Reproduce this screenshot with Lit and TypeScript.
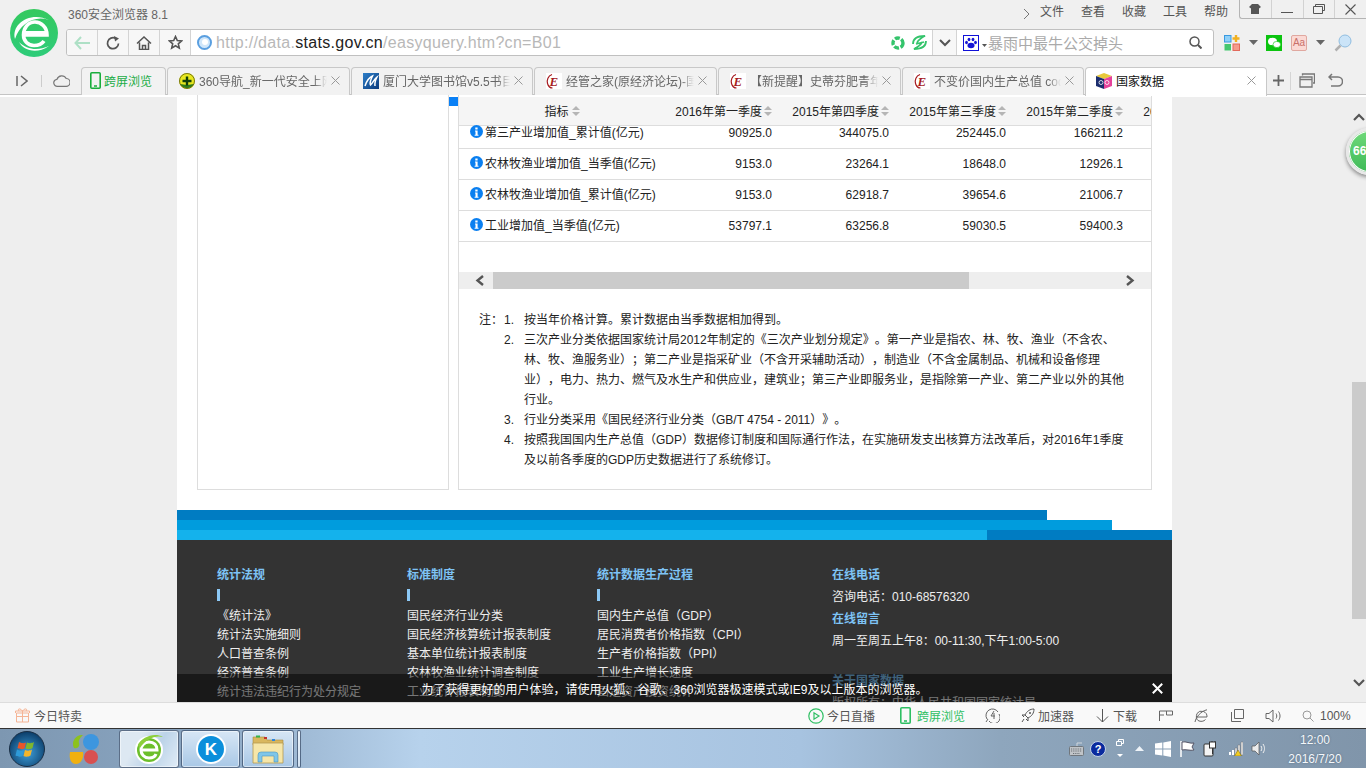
import { LitElement, html, css, svg } from "lit";
import { customElement } from "lit/decorators.js";

const logo = (s: number) => svg`<svg width=${s} height=${s} viewBox="0 0 48 48"><defs><linearGradient id="lg" x1="0" y1="0" x2="0" y2="1"><stop offset="0" stop-color="#35c95f"/><stop offset="1" stop-color="#2ecc7a"/></linearGradient></defs><circle cx="24" cy="24" r="24" fill="url(#lg)"/><path d="M13.500 26H37C37 18 31 13 25 13 18 13 13.500 19 13.500 26 13.500 32 18 36.500 24 36.500 28 36.500 32 35 34 32" fill="none" stroke="#fff" stroke-width="3.600"/><path d="M14 24.500h22" stroke="#fff" stroke-width="5"/><path d="M5 30C1 15 20 2 39 11 24 6 10 15 5 30Z" fill="#fff"/><path d="M9 33C13 41 26 46 39 37 28 42 17 41 9 33Z" fill="#fff"/></svg>`;
const eIcon = svg`<svg width="16" height="16" viewBox="0 0 16 16"><rect width="16" height="16" fill="#fff"/><path d="M6 1.500C2 3 .6 7 1.500 10.500 2.200 13 4 15 6.500 15" fill="none" stroke="#a61c22" stroke-width="1.200"/><text x="3.500" y="12.500" font-family="Liberation Serif" font-style="italic" font-weight="700" font-size="13" fill="#a61c22">E</text></svg>`;
const navIcon = svg`<svg width="16" height="16" viewBox="0 0 16 16"><circle cx="8" cy="8" r="8" fill="#e8e81e"/><path d="M1 11a8 8 0 0 0 14 0l-7 1Z" fill="#2f7d18"/><circle cx="8" cy="8" r="7.500" fill="none" stroke="#5a5a10" stroke-width=".8"/><path d="M8 3.500v9M3.500 8h9" stroke="#123f08" stroke-width="2.400"/></svg>`;
const libIcon = svg`<svg width="16" height="16" viewBox="0 0 16 16"><defs><linearGradient id="lb" x1="0" y1="0" x2="1" y2="1"><stop offset="0" stop-color="#2d7fc9"/><stop offset="1" stop-color="#0b3a7c"/></linearGradient></defs><rect width="16" height="16" fill="url(#lb)"/><path d="M2 13C4 7 7 4 9.500 3 8 6 6.500 10 7.500 12 10 10 11 6 14 4c-1.500 3-2.500 6-2 9" fill="none" stroke="#fff" stroke-width="1.500"/></svg>`;
const cubeIcon = svg`<svg width="16" height="16" viewBox="0 0 16 16"><path d="M0 3l8-3 8 3-8 3Z" fill="#e8c93a"/><path d="M0 3l8 3v10l-8-3Z" fill="#1b2d6e"/><path d="M8 6l8-3v10l-8 3Z" fill="#e6429b"/><circle cx="5" cy="9.500" r="2" fill="none" stroke="#fff" stroke-width=".8"/><circle cx="11" cy="9.500" r="2" fill="none" stroke="#fff" stroke-width=".8"/></svg>`;
const phoneIcon = (c: string) => svg`<svg width="11" height="17" viewBox="0 0 11 17"><rect x=".8" y=".8" width="9.400" height="15.400" rx="1" fill="none" stroke=${c} stroke-width="1.600"/><path d="M4 14h3" stroke=${c} stroke-width="1.600"/></svg>`;
const swirl = svg`<svg width="15" height="15" viewBox="0 0 15 15"><path d="M1 9C1 4 5 1 13 1 9 3 6 5 5 8M14 6c0 5-4 8-12 8 4-2 7-4 8-7M4 9l8-2" fill="none" stroke="#35c46c" stroke-width="1.800"/></svg>`;
const shutter = svg`<svg width="14" height="14" viewBox="0 0 14 14"><circle cx="7" cy="7" r="5" fill="none" stroke="#35c46c" stroke-width="3.400" stroke-dasharray="5 1.600"/></svg>`;
const closeX = svg`<svg width="9" height="9" viewBox="0 0 9 9"><path d="M.5.500l8 8M8.500.500l-8 8" stroke="#999" stroke-width="1"/></svg>`;
const tri = svg`<svg width="9" height="5" viewBox="0 0 9 5"><path d="M0 0h9L4.500 5Z" fill="#666"/></svg>`;
const sortIcon = svg`<svg width="8" height="10" viewBox="0 0 8 10"><path d="M4 0l4 4H0ZM4 10L0 6h8Z" fill="#b5b5b5"/></svg>`;
const infoIcon = svg`<svg width="13" height="13" viewBox="0 0 13 13"><circle cx="6.500" cy="6.500" r="6.500" fill="#0a7ff0"/><path d="M5.300 2.500h2.300v2H5.300ZM5 5.500h2.600v4.200h.9v1H4.600v-1h.9V6.500H5Z" fill="#fff"/></svg>`;

const tabs = [
  { w: 85, label: "跨屏浏览", icon: phoneIcon("#19ad3c"), kind: "green" },
  { w: 183, label: "360导航_新一代安全上网导航", icon: navIcon },
  { w: 182, label: "厦门大学图书馆v5.5书目检索系统", icon: libIcon },
  { w: 183, label: "经管之家(原经济论坛)-国内经济", icon: eIcon },
  { w: 183, label: "【新提醒】史蒂芬肥青年队队长", icon: eIcon },
  { w: 182, label: "不变价国内生产总值 code", icon: eIcon },
  { w: 182, label: "国家数据", icon: cubeIcon, kind: "active" },
];
const rows = [
  ["第三产业增加值_累计值(亿元)", "90925.0", "344075.0", "252445.0", "166211.2"],
  ["农林牧渔业增加值_当季值(亿元)", "9153.0", "23264.1", "18648.0", "12926.1"],
  ["农林牧渔业增加值_累计值(亿元)", "9153.0", "62918.7", "39654.6", "21006.7"],
  ["工业增加值_当季值(亿元)", "53797.1", "63256.8", "59030.5", "59400.3"],
];
const quarters = ["2016年第一季度", "2015年第四季度", "2015年第三季度", "2015年第二季度", "2015年第一季度"];
const notes = [
  ["1.", ["按当年价格计算。累计数据由当季数据相加得到。"]],
  ["2.", ["三次产业分类依据国家统计局2012年制定的《三次产业划分规定》。第一产业是指农、林、牧、渔业（不含农、", "林、牧、渔服务业）；第二产业是指采矿业（不含开采辅助活动），制造业（不含金属制品、机械和设备修理", "业），电力、热力、燃气及水生产和供应业，建筑业；第三产业即服务业，是指除第一产业、第二产业以外的其他", "行业。"]],
  ["3.", ["行业分类采用《国民经济行业分类（GB/T 4754 - 2011）》。"]],
  ["4.", ["按照我国国内生产总值（GDP）数据修订制度和国际通行作法，在实施研发支出核算方法改革后，对2016年1季度", "及以前各季度的GDP历史数据进行了系统修订。"]],
] as [string, string[]][];
const footerCols = [
  { w: 190, t: "统计法规", items: ["《统计法》", "统计法实施细则", "人口普查条例", "经济普查条例", "统计违法违纪行为处分规定"] },
  { w: 190, t: "标准制度", items: ["国民经济行业分类", "国民经济核算统计报表制度", "基本单位统计报表制度", "农林牧渔业统计调查制度", "工业统计报表制度"] },
  { w: 235, t: "统计数据生产过程", items: ["国内生产总值（GDP）", "居民消费者价格指数（CPI）", "生产者价格指数（PPI）", "工业生产增长速度", "固定资产投资统计"] },
];
const statusRight = [
  { w: 92, text: "今日直播", icon: svg`<svg width="16" height="16" viewBox="0 0 16 16"><circle cx="8" cy="8" r="7.200" fill="none" stroke="#2fbf63" stroke-width="1.200"/><path d="M6 4.800v6.400L11 8Z" fill="none" stroke="#2fbf63" stroke-width="1.200"/></svg>`, gap: 3 },
  { w: 85, text: "跨屏浏览", green: true, icon: phoneIcon("#2fbf63"), gap: 6 },
  { w: 36, text: "", icon: svg`<svg width="15" height="15" viewBox="0 0 15 15"><path d="M2 11A6 6 0 0 1 13 4M14 6A6 6 0 0 1 4 13M1 14l2-3" fill="none" stroke="#666"/><path d="M9 3L6 8h4M9 5v6" fill="none" stroke="#666"/></svg>`, gap: 0 },
  { w: 75, text: "加速器", icon: svg`<svg width="14" height="15" viewBox="0 0 14 15"><path d="M13 1C9 1 6 3 4 7l3 3c4-2 6-5 6-9ZM4 7H1l2 2M7 10v3l-2-2M3 11l-2 3" fill="none" stroke="#555"/><circle cx="9" cy="5" r="1" fill="#555"/></svg>`, gap: 3 },
  { w: 63, text: "下载", icon: svg`<svg width="13" height="14" viewBox="0 0 13 14"><path d="M6.500 0v13M1 7.500l5.500 5.500L12 7.500" fill="none" stroke="#555"/></svg>`, gap: 4 },
  { w: 35, text: "", icon: svg`<svg width="14" height="12" viewBox="0 0 14 12"><path d="M.5 11V1h13v4h-6v-4M.5 5H5" fill="none" stroke="#666"/></svg>`, gap: 0 },
  { w: 37, text: "", icon: svg`<svg width="14" height="14" viewBox="0 0 14 14"><path d="M2.500 8h10.500A5.500 5.500 0 0 0 3 4.500C2 7 2 10 4 11.500c2.500 1.500 6 1 7.500-1M1 13C2 8 7 2 13 .8" fill="none" stroke="#666"/></svg>`, gap: 0 },
  { w: 34, text: "", icon: svg`<svg width="13" height="13" viewBox="0 0 13 13"><path d="M3.500 9.500V.5h9v9ZM.5 3v9.500H10" fill="none" stroke="#666"/></svg>`, gap: 0 },
  { w: 37, text: "", icon: svg`<svg width="16" height="14" viewBox="0 0 16 14"><path d="M1 4.500h3L8 1v12L4 9.500H1ZM11 4.500c1 1.500 1 3.500 0 5M13.500 2.500c2 3 2 6 0 9" fill="none" stroke="#666"/></svg>`, gap: 0 },
  { w: 49, text: "100%", icon: svg`<svg width="12" height="12" viewBox="0 0 12 12"><circle cx="5" cy="5" r="4" fill="none" stroke="#999"/><path d="M8 8l3.500 3.500" stroke="#999"/></svg>`, gap: 6 },
];
const taskLogo = svg`<svg width="30" height="32" viewBox="0 0 30 32"><circle cx="15" cy="17" r="14" fill="#fff"/><circle cx="15" cy="17" r="12" fill="#6cbf2b"/><path d="M7 17h16c0-5-3-8-8-8s-8 4-8 8 3 8 8 8c3 0 6-1 7-4" fill="none" stroke="#fff" stroke-width="3"/><path d="M4 12C8 4 20-1 29 4 21 2 12 6 6 15Z" fill="#8ccf3a"/></svg>`;

@customElement("app-root")
export class AppRoot extends LitElement {
  static styles = css`
    :host { display: block; width: 1366px; height: 768px; overflow: hidden; font-family: "Liberation Sans", "Noto Sans CJK SC", sans-serif; font-size: 12px; color: #333; background: #f0f0f0; text-spacing-trim: space-all; }
    svg { display: block; flex: none; }
    .chrome { height: 95px; background: #f0f0f0; display: flex; flex-direction: column; }
    .top { display: flex; height: 67px; }
    .logo { width: 66px; padding: 9px 0 0 10px; box-sizing: border-box; }
    .topmain { flex: 1; display: flex; flex-direction: column; }
    .title { height: 29px; display: flex; align-items: flex-start; }
    .title-text { margin: 8px 0 0 2px; line-height: 14px; color: #666; font-size: 12px; flex: 1; }
    .chev { margin: 8px 10px 0 0; }
    .menu { display: flex; gap: 17px; margin: 5px 11px 0 0; line-height: 14px; color: #555; }
    .win { display: flex; width: 127px; height: 19px; box-sizing: border-box; border: 1px solid #b4b4b4; border-top: 0; border-right: 0; border-radius: 0 0 0 3px; }
    .win span { flex: 1; display: flex; align-items: center; justify-content: center; border-right: 1px solid #d2d2d2; }
    .win span:last-child { border-right: 0; }
    .addrrow { display: flex; align-items: center; height: 27px; }
    .addr { width: 1148px; height: 27px; box-sizing: border-box; border: 1px solid #c0c0c0; border-radius: 3px; display: flex; background: #fff; overflow: hidden; }
    .nav { width: 31px; box-sizing: border-box; display: flex; align-items: center; justify-content: center; background: #f7f7f7; border-right: 1px solid #d4d4d4; flex: none; }
    .url { flex: 1; display: flex; align-items: center; padding-left: 6px; font-size: 16px; color: #b8b8b8; letter-spacing: .3px; }
    .url b { font-weight: 400; color: #222; }
    .url svg { margin-right: 4px; }
    .urlicons { display: flex; gap: 7px; margin: 0 5px 0 auto; align-items: center; }
    .urlicons svg { margin-right: 0; }
    .chevbox { width: 25px; box-sizing: border-box; flex: none; display: flex; align-items: center; justify-content: center; border-left: 1px solid #d4d4d4; border-right: 1px solid #d4d4d4; background: #f7f7f7; }
    .search { width: 256px; flex: none; display: flex; align-items: center; padding-left: 6px; box-sizing: border-box; font-size: 15px; color: #aaa; }
    .paw { width: 16px; height: 16px; border: 1px solid #1010d8; box-sizing: border-box; flex: none; }
    .search .t { margin: 6px 1px 0 3px; }
    .search .txt { flex: 1; white-space: nowrap; }
    .search .mag { margin-right: 11px; }
    .tools { display: flex; align-items: center; padding-left: 10px; }
    .m9 { margin-left: 9px; }
    .m8 { margin-left: 8px; }
    .aa { width: 16px; height: 16px; box-sizing: border-box; border: 1px solid #e0a8a0; border-radius: 2px; background: #fbd9d4; color: #c8706a; font-size: 10px; line-height: 14px; text-align: center; margin-left: 9px; }
    .tabrow { height: 28px; display: flex; border-bottom: 1px solid #c4c4c4; box-sizing: border-box; }
    .tabtools { width: 81px; display: flex; align-items: center; padding-left: 16px; box-sizing: border-box; flex: none; }
    .sep { width: 1px; height: 12px; background: #ccc; margin: 0 11px 0 13px; flex: none; }
    .tabs { display: flex; gap: 1px; }
    .tab { box-sizing: border-box; height: 28px; border: 1px solid #c8c8c8; border-bottom: 0; border-radius: 4px 4px 0 0; background: #f2f2f2; display: flex; align-items: center; padding: 0 9px 2px 11px; gap: 4px; color: #666; white-space: nowrap; overflow: hidden; }
    .tab .lbl { flex: 1; overflow: hidden; -webkit-mask-image: linear-gradient(to right, #000 90%, transparent); mask-image: linear-gradient(to right, #000 90%, transparent); }
    .tab.green { color: #1bad46; font-size: 12px; padding: 0 0 2px 8px; gap: 3px; }
    .tab.green .lbl { -webkit-mask-image: none; mask-image: none; }
    .tab.active { background: #fff; color: #111; height: 29px; padding: 0 10px 3px 10px; position: relative; z-index: 1; }
    .tab.active .lbl { -webkit-mask-image: none; mask-image: none; }
    .tabend { display: flex; align-items: center; padding-left: 6px; flex: none; }
    .tabend .d { width: 1px; height: 18px; background: #d5d5d5; margin: 0 8px 0 6px; }
    .view { height: 607px; background: linear-gradient(#fff 2px, #eee 2px); display: flex; position: relative; overflow: hidden; }
    .page { margin-left: 177px; width: 995px; background: #fff; position: relative; display: flex; flex-direction: column; flex: none; }
    .panels { height: 395px; display: flex; padding-left: 20px; gap: 9px; position: relative; flex: none; }
    .lp { width: 252px; box-sizing: border-box; border: 1px solid #ddd; border-top: 0; }
    .rp { width: 694px; box-sizing: border-box; border: 1px solid #ddd; border-top: 0; padding-top: 2px; overflow: hidden; }
    .blue { position: absolute; left: 272px; top: 2px; width: 9px; height: 9px; background: #0a80f5; }
    .hdr { height: 29px; background: #f5f5f5; border-bottom: 1px solid #ddd; box-sizing: border-box; display: flex; color: #222; padding-bottom: 2px; }
    .c1 { width: 197px; flex: none; display: flex; align-items: center; }
    .hdr .c1 { justify-content: center; padding-left: 9px; box-sizing: border-box; gap: 3px; }
    .cn { width: 117px; flex: none; display: flex; align-items: center; justify-content: flex-end; padding-right: 1px; box-sizing: border-box; white-space: nowrap; gap: 2px; }
    .hdr .cn svg, .hdr .c1 svg { margin-top: 2px; }
    .clip { display: flex; overflow: hidden; flex: 1; }
    .row { height: 31px; display: flex; border-bottom: 1px solid #ddd; box-sizing: border-box; padding-bottom: 2px; color: #222; }
    .row.first { height: 23px; padding-bottom: 10px; }
    .row .c1 { padding: 0 0 2px 11px; box-sizing: border-box; gap: 2px; white-space: nowrap; }
    .row .cn { padding-top: 2px; }
    .hbar { height: 17px; margin-top: 30px; background: #eee; display: flex; align-items: center; position: relative; }
    .hbar .thumb { margin-left: 34px; width: 476px; height: 17px; background: #cbcbcb; }
    .hbar .l { position: absolute; left: 16px; top: 3px; }
    .hbar .r { position: absolute; right: 16px; top: 3px; }
    .notes { margin: 21px 0 0 20px; display: flex; line-height: 20px; color: #222; white-space: nowrap; }
    .notes .zhu { width: 25px; flex: none; }
    .nl { display: flex; }
    .nl .n { width: 20px; flex: none; }
    .stripes { margin-top: 20px; flex: none; }
    .s1 { height: 10px; width: 870px; background: #007cc2; }
    .s2 { height: 10px; width: 935px; background: #009cdd; }
    .s3 { height: 10px; background: linear-gradient(to right, #14b2ec 810px, #007cc2 810px); }
    .foot { flex: 1; background: #333; display: flex; padding: 26px 0 0 40px; color: #eee; line-height: 19px; overflow: hidden; }
    .fc { flex: none; }
    .fh { color: #7ec3f5; font-weight: 700; line-height: 18px; }
    .bar { width: 3px; height: 12px; background: #8cc8f5; margin: 5px 0 6px; }
    .fc4 { line-height: 22px; margin-top: -2px; }
    .fc4 .fh { line-height: 22px; }
    .fc4 .sp { margin-top: 18px; }
    .notice { position: absolute; left: 0; right: 0; bottom: 0; height: 28px; background: rgba(0,0,0,.5); color: #fff; display: flex; align-items: center; justify-content: center; }
    .notice svg { position: absolute; right: 9px; top: 9px; }
    .vs { flex: 1; position: relative; display: flex; flex-direction: column; align-items: flex-end; }
    .vs .up { margin: 18px 1px 0 0; }
    .vs .thumb { width: 14px; height: 237px; margin-top: 261px; background: #cbcbcb; }
    .vs .down { margin: 60px 1px 0 0; }
    .ball { position: absolute; left: 1346px; top: 33px; width: 47px; height: 47px; border-radius: 50%; box-sizing: border-box; border: 3px solid #e8e8e8; background: linear-gradient(#6fd979, #3fba58); box-shadow: 0 2px 4px rgba(0,0,0,.45), inset 0 0 0 1px #fff; color: #fff; font-weight: 700; font-size: 12px; line-height: 41px; padding-left: 4px; }
    .status { height: 26px; background: #f9f9f9; border-top: 1px solid #ddd; box-sizing: border-box; display: flex; align-items: center; color: #555; }
    .today { display: flex; align-items: center; gap: 4px; padding-left: 15px; }
    .sr { display: flex; margin-left: auto; padding-right: 15px; }
    .si { display: flex; align-items: center; box-sizing: border-box; white-space: nowrap; }
    .si.g { color: #2fbf63; }
    .task { height: 40px; background: linear-gradient(to right, #7d97b1 0, #8ba6c2 200px, #b7d2ec 420px, #a7c3e0 800px, #8ea6bd 1000px, #8095aa 1366px); border-top: 1px solid #333; box-sizing: border-box; display: flex; align-items: center; }
    .orb { margin-left: 9px; }
    .ms { margin-left: 24px; }
    .tb { height: 38px; margin-left: 2px; box-sizing: border-box; border: 1px solid rgba(40,60,90,.7); border-radius: 3px; background: linear-gradient(#d7e6f5, #a9c8e6); box-shadow: inset 0 0 0 1px rgba(255,255,255,.5); display: flex; align-items: center; justify-content: center; flex: none; }
    .tb.on { background: linear-gradient(120deg, #dde8f2 30%, #bcd3e8 60%, #e0ecf7); margin-left: 20px; width: 60px; }
    .tb.k { width: 59px; }
    .tb.f { width: 52px; }
    .tb.x { width: 4px; margin-left: 3px; }
    .tray { margin-left: auto; display: flex; align-items: center; padding-right: 21px; color: #fff; }
    .trayicons { display: flex; align-items: center; }
    .ti6 { margin-left: 6px; }
    .ti8 { margin-left: 8px; }
    .ti9 { margin-left: 9px; }
    .ti10 { margin-left: 10px; }
    .ti11 { margin-left: 11px; }
    .clock { width: 60px; margin-left: 19px; padding-top: 2px; text-align: center; line-height: 19px; font-size: 12px; color: #f4f8fb; text-shadow: 0 0 2px rgba(60,80,100,.6); }
    .undo { margin-left: 13px; }
  `;

  render() {
    return html`
      <div class="chrome">
        <div class="top">
          <div class="logo">${logo(48)}</div>
          <div class="topmain">
            <div class="title">
              <div class="title-text">360安全浏览器 8.1</div>
              <svg class="chev" width="7" height="12" viewBox="0 0 7 12"><path d="M1 1l5 5-5 5" fill="none" stroke="#777"/></svg>
              <div class="menu"><span>文件</span><span>查看</span><span>收藏</span><span>工具</span><span>帮助</span></div>
              <div class="win">
                <span><svg width="12" height="10" viewBox="0 0 12 10"><path d="M3 0h6l3 3-2 1.500V10H2V4.500L0 3Z" fill="#555"/></svg></span>
                <span><svg width="12" height="10" viewBox="0 0 12 10"><path d="M0 8.500h12" stroke="#555"/></svg></span>
                <span><svg width="12" height="10" viewBox="0 0 12 10"><path d="M.5 2.500h9v7h-9ZM2.500 2.500V.5h9v6H9.500" fill="none" stroke="#555"/></svg></span>
                <span><svg width="11" height="11" viewBox="0 0 11 11"><path d="M.5.500l10 10M10.500.500l-10 10" stroke="#555" stroke-width="1.100"/></svg></span>
              </div>
            </div>
            <div class="addrrow">
              <div class="addr">
                <div class="nav"><svg width="16" height="14" viewBox="0 0 16 14"><path d="M7 1L1.500 7 7 13M1.500 7H16" fill="none" stroke="#aee0c6" stroke-width="2"/></svg></div>
                <div class="nav"><svg width="14" height="14" viewBox="0 0 14 14"><path d="M12.500 7.500A5.500 5.500 0 1 1 9.500 2.300" fill="none" stroke="#555" stroke-width="1.700"/><path d="M8 0l5 2.500-4 3Z" fill="#555"/></svg></div>
                <div class="nav"><svg width="16" height="14" viewBox="0 0 16 14"><path d="M1 7.500L8 1l7 6.500M3.500 6.500v7h9v-7M6.500 13.500v-4h3v4" fill="none" stroke="#555" stroke-width="1.500"/></svg></div>
                <div class="nav"><svg width="15" height="15" viewBox="0 0 15 15"><path d="M7.500 1.500l1.800 4 4.300.4-3.300 2.900 1 4.300-3.800-2.300-3.800 2.300 1-4.300L1.400 5.900l4.300-.4Z" fill="none" stroke="#555" stroke-width="1.600"/></svg></div>
                <div class="url">
                  <svg width="15" height="15" viewBox="0 0 15 15"><circle cx="7.500" cy="7.500" r="6.500" fill="#cfe6fa" stroke="#5a9fe0" stroke-width="2"/><circle cx="8" cy="7" r="3" fill="#fff"/></svg>
                  <span>http://data.<b>stats.gov.cn</b>/easyquery.htm?cn=B01</span>
                  <div class="urlicons">${shutter}${swirl}</div>
                </div>
                <div class="chevbox"><svg width="12" height="8" viewBox="0 0 12 8"><path d="M1 1l5 5 5-5" fill="none" stroke="#555" stroke-width="2"/></svg></div>
                <div class="search">
                  <div class="paw"><svg width="14" height="14" viewBox="0 0 14 14"><ellipse cx="7" cy="9.500" rx="3.500" ry="2.800" fill="#1515d5"/><ellipse cx="2.500" cy="6.500" rx="1.400" ry="1.800" fill="#1515d5"/><ellipse cx="11.500" cy="6.500" rx="1.400" ry="1.800" fill="#1515d5"/><ellipse cx="5" cy="3.500" rx="1.400" ry="1.800" fill="#1515d5"/><ellipse cx="9" cy="3.500" rx="1.400" ry="1.800" fill="#1515d5"/></svg></div>
                  <svg class="t" width="5" height="3" viewBox="0 0 5 3"><path d="M0 0h5L2.500 3Z" fill="#555"/></svg>
                  <div class="txt">暴雨中最牛公交掉头</div>
                  <svg class="mag" width="13" height="13" viewBox="0 0 13 13"><circle cx="5.500" cy="5.500" r="4.500" fill="none" stroke="#555" stroke-width="1.500"/><path d="M9 9l3.500 3.500" stroke="#555" stroke-width="2"/></svg>
                </div>
              </div>
              <div class="tools">
                <svg width="16" height="16" viewBox="0 0 16 16"><rect x=".5" y=".5" width="6.500" height="6.500" fill="#8fd0f8" stroke="#3a9ae0"/><rect x=".5" y="9" width="6.500" height="6.500" fill="#45c76f"/><rect x="9" y="9" width="6.500" height="6.500" fill="#f59b8c" stroke="#e26a5c"/><path d="M12 0v7M8.500 3.500h7" stroke="#f0b020" stroke-width="2.400"/></svg>
                <span class="m9">${tri}</span>
                <svg class="m8" width="16" height="16" viewBox="0 0 16 16"><rect width="16" height="16" fill="#0bc40f"/><ellipse cx="6.500" cy="6.500" rx="4.500" ry="3.700" fill="#fff"/><ellipse cx="10.800" cy="9.500" rx="3.800" ry="3.100" fill="#fff" stroke="#0bc40f" stroke-width=".6"/></svg>
                <div class="aa">Aa</div>
                <span class="m9">${tri}</span>
                <svg class="m9" width="18" height="18" viewBox="0 0 18 18"><circle cx="11" cy="7" r="6" fill="#cbe4f8" stroke="#90bde0"/><path d="M6.500 11.500L1.500 16.500" stroke="#b0b0b0" stroke-width="2.500"/></svg>
              </div>
            </div>
          </div>
        </div>
        <div class="tabrow">
          <div class="tabtools">
            <svg width="12" height="12" viewBox="0 0 12 12"><path d="M1 1v10" stroke="#666" stroke-width="1.500"/><path d="M5 1l6 5-6 5" fill="none" stroke="#666" stroke-width="1.500"/></svg>
            <div class="sep"></div>
            <svg width="17" height="13" viewBox="0 0 17 13"><path d="M4.500 12.300a3.500 3.500 0 0 1-.5-7 5 5 0 0 1 9.200-.8 3.900 3.900 0 0 1-.2 7.800Z" fill="none" stroke="#777" stroke-width="1.200"/></svg>
          </div>
          <div class="tabs">
            ${tabs.map(t => html`<div class="tab ${t.kind ?? ""}" style="width:${t.w}px">${t.icon}<span class="lbl">${t.label}</span>${t.kind === "green" ? "" : closeX}</div>`)}
          </div>
          <div class="tabend">
            <svg width="11" height="11" viewBox="0 0 11 11"><path d="M5.500 0v11M0 5.500h11" stroke="#666" stroke-width="1.800"/></svg>
            <div class="d"></div>
            <svg width="16" height="15" viewBox="0 0 16 15"><path d="M3.500 2.500V1h12v9H14M1 4h12v10H1ZM1 6.500h12" fill="none" stroke="#777" stroke-width="1.300"/></svg>
            <svg class="undo" width="15" height="15" viewBox="0 0 15 15"><path d="M4 1L1 4l3 3M1 4h9a4.500 4.500 0 0 1 0 9H3" fill="none" stroke="#777" stroke-width="1.500"/></svg>
          </div>
        </div>
      </div>

      <div class="view">
        <div class="page">
          <div class="panels">
            <div class="lp"></div>
            <div class="rp">
              <div class="hdr">
                <div class="c1">指标${sortIcon}</div>
                <div class="clip">${quarters.map(q => html`<div class="cn">${q}${sortIcon}</div>`)}</div>
              </div>
              ${rows.map((r, i) => html`<div class="row ${i === 0 ? "first" : ""}">
                <div class="c1">${infoIcon}<span>${r[0]}</span></div>
                ${r.slice(1).map(v => html`<div class="cn">${v}</div>`)}
              </div>`)}
              <div class="hbar">
                <svg class="l" width="10" height="11" viewBox="0 0 10 11"><path d="M8 1L2.500 5.500 8 10" fill="none" stroke="#555" stroke-width="2.400"/></svg>
                <div class="thumb"></div>
                <svg class="r" width="10" height="11" viewBox="0 0 10 11"><path d="M2 1l5.500 4.500L2 10" fill="none" stroke="#555" stroke-width="2.400"/></svg>
              </div>
              <div class="notes">
                <div class="zhu">注：</div>
                <div>${notes.map(([n, ls]) => html`<div class="nl"><div class="n">${n}</div><div>${ls.map(l => html`<div>${l}</div>`)}</div></div>`)}</div>
              </div>
            </div>
            <div class="blue"></div>
          </div>
          <div class="stripes"><div class="s1"></div><div class="s2"></div><div class="s3"></div></div>
          <div class="foot">
            ${footerCols.map(c => html`<div class="fc" style="width:${c.w}px"><div class="fh">${c.t}</div><div class="bar"></div>${c.items.map(i => html`<div>${i}</div>`)}</div>`)}
            <div class="fc fc4">
              <div class="fh">在线电话</div><div>咨询电话：010-68576320</div>
              <div class="fh">在线留言</div><div>周一至周五上午8：00-11:30,下午1:00-5:00</div>
              <div class="fh sp">关于国家数据</div><div>版权所有：中华人民共和国国家统计局</div>
            </div>
          </div>
          <div class="notice"><span>为了获得更好的用户体验，请使用火狐、谷歌、360浏览器极速模式或IE9及以上版本的浏览器。</span>
            <svg width="11" height="11" viewBox="0 0 11 11"><path d="M.8.800l9.400 9.400M10.200.800L.8 10.200" stroke="#fff" stroke-width="2"/></svg>
          </div>
        </div>
        <div class="vs">
          <svg class="up" width="12" height="8" viewBox="0 0 12 8"><path d="M1 7l5-5 5 5" fill="none" stroke="#555" stroke-width="2.200"/></svg>
          <div class="thumb"></div>
          <svg class="down" width="12" height="8" viewBox="0 0 12 8"><path d="M1 1l5 5 5-5" fill="none" stroke="#555" stroke-width="2.200"/></svg>
        </div>
        <div class="ball">66</div>
      </div>

      <div class="status">
        <div class="today">
          <svg width="15" height="15" viewBox="0 0 15 15"><path d="M1.500 5h12v9h-12ZM.5 5V3h14v2M7.500 3v11M1.500 8.500h12M4 3C2 1 5-.5 7.500 3 10-.5 13 1 11 3" fill="none" stroke="#f5b596"/></svg>
          <span>今日特卖</span>
        </div>
        <div class="sr">
          ${statusRight.map(s => html`<div class="si ${s.green ? "g" : ""}" style="width:${s.w}px;gap:${s.gap}px">${s.icon}${s.text ? html`<span>${s.text}</span>` : ""}</div>`)}
        </div>
      </div>

      <div class="task">
        <svg class="orb" width="36" height="36" viewBox="0 0 36 36"><defs><radialGradient id="orb" cx=".5" cy=".6" r=".6"><stop offset="0" stop-color="#3ea0dc"/><stop offset="1" stop-color="#0b3c68"/></radialGradient></defs><circle cx="18" cy="18" r="17.500" fill="url(#orb)" stroke="#1a2e44"/><path d="M10 11c3 1.500 5 1.500 7 .5l-1.500 6c-2 1-4 1-7-.5Z" fill="#e8562a"/><path d="M18 11.500c2 1 5 1 7-.5l-1.500 6c-2 1.500-5 1.500-7 .5Z" fill="#7fb62e"/><path d="M8 18.500c3 1.500 5 1.500 7 .5l-1.500 6c-2 1-4 1-7-.5Z" fill="#2e9ad8"/><path d="M16 19c2 1 5 1 7-.5l-1.500 6c-2 1.500-5 1.500-7 .5Z" fill="#f3b52b"/></svg>
        <svg class="ms" width="30" height="32" viewBox="0 0 30 32"><path d="M14 2A9 9 0 0 0 5 15c4 1 6-2 5-5s2-6 4-8Z" fill="#8cc21f"/><circle cx="22" cy="9" r="8" fill="#3d96df"/><path d="M1 19h13c1 4-1 12-7 12S0 24 1 19Z" fill="#f0b010"/><circle cx="22" cy="24" r="7" fill="#d85050"/></svg>
        <div class="tb on">${taskLogo}</div>
        <div class="tb k"><svg width="30" height="30" viewBox="0 0 30 30"><circle cx="15" cy="15" r="15" fill="#fff"/><circle cx="15" cy="15" r="13" fill="#0b8fdb"/><text x="15" y="21" text-anchor="middle" font-family="Liberation Sans" font-weight="700" font-size="17" fill="#fff">K</text></svg></div>
        <div class="tb f"><svg width="32" height="30" viewBox="0 0 32 30"><path d="M1 3h12l2 3h16v5H1Z" fill="#d9b75e" stroke="#a88a3c" stroke-width=".6"/><path d="M4 1.500h4v2H4Z" fill="#35b34a"/><path d="M12 3h3v2h-3Z" fill="#c03030"/><path d="M20 5h3v2h-3Z" fill="#2e86de"/><path d="M1 9h30v20H1Z" fill="#f6e6a8" stroke="#b59a50" stroke-width=".8"/><path d="M6 28v-7a3 3 0 0 1 3-3h14a3 3 0 0 1 3 3v7h-4v-6H10v6Z" fill="#7fc6e8" stroke="#4a95bf" stroke-width=".6"/></svg></div>
        <div class="tb x"></div>
        <div class="tray">
          <div class="trayicons">
            <svg width="15" height="14" viewBox="0 0 15 14"><path d="M8 4V1h5" fill="none" stroke="#d0d6dc"/><rect x=".5" y="4.500" width="14" height="9" rx="1" fill="#c0c4c8" stroke="#70767c"/><path d="M2 7h11M2 9h11M4 11.500h7" stroke="#6a7076" stroke-dasharray="1 .8"/></svg>
            <svg class="ti6" width="16" height="16" viewBox="0 0 16 16"><circle cx="8" cy="8" r="7.500" fill="#0a2a9e" stroke="#c6d4e6"/><text x="8" y="12" text-anchor="middle" font-family="Liberation Sans" font-weight="700" font-size="11" fill="#fff">?</text></svg>
            <svg class="ti10" width="8" height="20" viewBox="0 0 8 20"><path d="M2.500 2.500V.5h5v4H5.500M.5 2.500h5v4h-5Z" fill="none" stroke="#fff"/><path d="M1 15h6l-3 3Z" fill="#fff"/></svg>
            <svg class="ti11" width="9" height="5" viewBox="0 0 9 5"><path d="M0 5h9L4.500 0Z" fill="#eef3f8"/></svg>
            <svg class="ti11" width="16" height="16" viewBox="0 0 16 16"><path d="M0 2.500l7.300-1v6H0ZM8.300 1.400L16 0v7.500H8.300ZM0 8.500h7.300v6L0 13.500ZM8.300 8.500H16V16l-7.700-1.400Z" fill="#fff"/></svg>
            <svg class="ti9" width="15" height="16" viewBox="0 0 15 16"><path d="M1 0v16" stroke="#fff" stroke-width="1.500"/><path d="M2 1c4-1 8 2 12 1l-2 4 2 3c-4 1-8-1-12 0Z" fill="#fff" stroke="#556"/></svg>
            <svg class="ti8" width="15" height="16" viewBox="0 0 15 16"><rect x="1" y="3" width="9" height="12" rx="1" fill="#f4f4f4" stroke="#333"/><rect x="6.500" y="1" width="6" height="6" fill="#fff" stroke="#333"/><path d="M9 1V-1M12 1V-1M9.500 7v6" stroke="#333"/></svg>
            <svg class="ti10" width="15" height="15" viewBox="0 0 15 15"><path d="M1 11h2v3H1ZM4 9h2v5H4Z" fill="#fff"/><path d="M7 7h2v7H7ZM10 4h2v10h-2ZM13 1h2v13h-2Z" fill="#e8e8e8" stroke="#666" stroke-width=".4"/><path d="M6.500 15l3.500-6 3.500 6Z" fill="#f2cc20" stroke="#7a6410" stroke-width=".5"/></svg>
            <svg class="ti8" width="15" height="15" viewBox="0 0 15 15"><path d="M1 5h3l4-4v13l-4-4H1Z" fill="#ececec" stroke="#555" stroke-width=".7"/><path d="M10 5c1 1.500 1 3.500 0 5M12 3c2 3 2 6 0 9" fill="none" stroke="#f2f2f2"/></svg>
          </div>
          <div class="clock"><div>12:00</div><div>2016/7/20</div></div>
        </div>
      </div>
    `;
  }
}
